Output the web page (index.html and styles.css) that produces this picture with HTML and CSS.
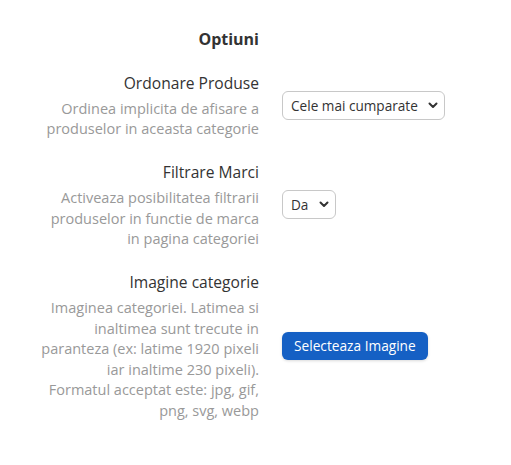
FILE: index.html
```html
<!DOCTYPE html>
<html lang="ro">
<head>
<meta charset="utf-8">
<title>Optiuni</title>
<link rel="stylesheet" href="styles.css">
</head>
<body>
<div class="options">
  <div class="grid">
    <h2 class="heading">Optiuni</h2>
    <div></div>

    <div class="label-col">
      <div class="label">Ordonare Produse</div>
      <div class="desc">Ordinea implicita de afisare a<br>produselor in aceasta categorie</div>
    </div>
    <div class="control-col">
      <div class="select-wrap">
        <select class="select">
          <option>Cele mai cumparate</option>
        </select>
        <svg class="chev" width="10" height="7" viewBox="0 0 10 7"><path d="M1.5 1.5 L5 5 L8.5 1.5" fill="none" stroke="#333" stroke-width="2" stroke-linecap="round" stroke-linejoin="round"/></svg>
      </div>
    </div>

    <div class="label-col">
      <div class="label">Filtrare Marci</div>
      <div class="desc">Activeaza posibilitatea filtrarii<br>produselor in functie de marca<br>in pagina categoriei</div>
    </div>
    <div class="control-col">
      <div class="select-wrap">
        <select class="select">
          <option>Da</option>
        </select>
        <svg class="chev" width="10" height="7" viewBox="0 0 10 7"><path d="M1.5 1.5 L5 5 L8.5 1.5" fill="none" stroke="#333" stroke-width="2" stroke-linecap="round" stroke-linejoin="round"/></svg>
      </div>
    </div>

    <div class="label-col">
      <div class="label">Imagine categorie</div>
      <div class="desc">Imaginea categoriei. Latimea si<br>inaltimea sunt trecute in<br>paranteza (ex: latime 1920 pixeli<br>iar inaltime 230 pixeli).<br>Formatul acceptat este: jpg, gif,<br>png, svg, webp</div>
    </div>
    <div class="control-col">
      <button class="btn" type="button">Selecteaza Imagine</button>
    </div>
  </div>
</div>
</body>
</html>
```

FILE: styles.css
```css
html, body {
  margin: 0;
  padding: 0;
  background: #fff;
}

body {
  font-family: "Open Sans", "Liberation Sans", sans-serif;
  color: #333;
}

.options {
  padding: 27px 0 0 0;
}

.grid {
  display: grid;
  grid-template-columns: 259px auto;
  column-gap: 23px;
  row-gap: 20.5px;
  align-items: center;
  justify-content: start;
}

.heading {
  margin: 1px 0 0 0;
  font-size: 16px;
  font-weight: 700;
  line-height: 22px;
  text-align: right;
  color: #333;
}

.label-col {
  text-align: right;
  white-space: nowrap;
}

.label {
  font-size: 15.6px;
  line-height: 24px;
  color: #333;
}

.desc {
  margin-top: 4px;
  font-size: 14.5px;
  line-height: 20.5px;
  color: #999;
}

.control-col {
  display: flex;
  align-items: center;
}

.select-wrap {
  position: relative;
  display: inline-flex;
}

.select {
  appearance: none;
  -webkit-appearance: none;
  font-family: "Open Sans", "Liberation Sans", sans-serif;
  font-size: 13.6px;
  color: #333;
  background: #fff;
  border: 1px solid #c8c8c8;
  border-radius: 6px;
  height: 29px;
  padding: 0 26px 0 8px;
  margin: 0;
}

.chev {
  position: absolute;
  right: 7px;
  top: 11px;
  pointer-events: none;
}

.btn {
  font-family: "Open Sans", "Liberation Sans", sans-serif;
  font-size: 13.7px;
  color: #fff;
  background: #1560c4;
  border: none;
  border-radius: 6px;
  height: 28px;
  padding: 0 12px;
  box-shadow: 0 1px 3px rgba(0, 0, 0, 0.15);
}
```
